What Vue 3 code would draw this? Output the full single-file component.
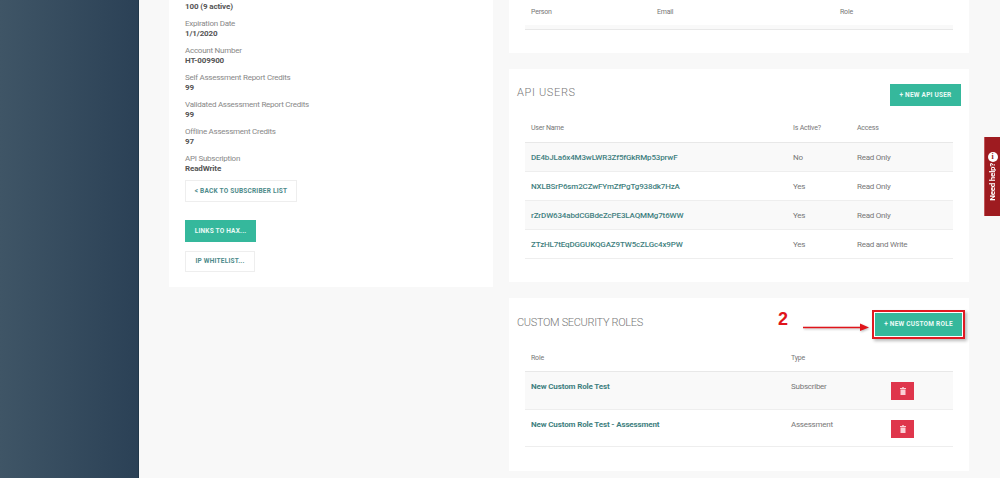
<script setup>
const fields = [
  ['Expiration Date', '1/1/2020'],
  ['Account Number', 'HT-009900'],
  ['Self Assessment Report Credits', '99'],
  ['Validated Assessment Report Credits', '99'],
  ['Offline Assessment Credits', '97'],
  ['API Subscription', 'ReadWrite'],
]
const apiUsers = [
  ['DE4bJLa6x4M3wLWR3Zf5fGkRMp53prwF', 'No', 'Read Only'],
  ['NXLBSrP6sm2CZwFYmZfPgTg938dk7HzA', 'Yes', 'Read Only'],
  ['rZrDW634abdCGBdeZcPE3LAQMMg7t6WW', 'Yes', 'Read Only'],
  ['ZTzHL7tEqDGGUKQGAZ9TW5cZLGc4x9PW', 'Yes', 'Read and Write'],
]
const roles = [
  ['New Custom Role Test', 'Subscriber'],
  ['New Custom Role Test - Assessment', 'Assessment'],
]
</script>

<template>
  <div class="page">
    <aside class="sidebar"></aside>
    <main class="main">
      <section class="card left">
        <div class="value first">100 (9 active)</div>
        <div v-for="f in fields" :key="f[0]" class="field">
          <div class="label">{{ f[0] }}</div>
          <div class="value">{{ f[1] }}</div>
        </div>
        <a class="btn outline back">&lt; Back to subscriber list</a>
        <a class="btn solid links">Links to HAX...</a>
        <a class="btn outline ip">IP Whitelist...</a>
      </section>
      <div class="right">
        <section class="card people">
          <div class="thead people-head">
            <span class="c-person">Person</span>
            <span class="c-email">Email</span>
            <span>Role</span>
          </div>
          <div class="empty-row"></div>
        </section>
        <section class="card api">
          <header class="card-head">
            <h2 class="api-title">API Users</h2>
            <a class="btn solid">+ New API User</a>
          </header>
          <div class="thead api-row api-thead">
            <span>User Name</span><span>Is Active?</span><span>Access</span>
          </div>
          <div v-for="u in apiUsers" :key="u[0]" class="api-row row">
            <a class="link">{{ u[0] }}</a><span>{{ u[1] }}</span><span>{{ u[2] }}</span>
          </div>
        </section>
        <section class="card rolescard">
          <header class="card-head role-head">
            <h2 class="role-title">Custom Security Roles</h2>
            <a class="btn solid marked">+ New Custom Role</a>
            <span class="note">2</span>
            <svg class="arrow" width="68" height="10" viewBox="0 0 68 10">
              <path d="M0 5.5H58" stroke="#e0141a" stroke-width="1.5" fill="none" />
              <path d="M57 1.5L66 5.5L57 9Z" fill="#e0141a" />
            </svg>
          </header>
          <div class="thead role-row role-thead">
            <span>Role</span><span>Type</span><span></span>
          </div>
          <div v-for="r in roles" :key="r[0]" class="role-row row">
            <a class="link strong">{{ r[0] }}</a>
            <span>{{ r[1] }}</span>
            <button class="del" type="button" aria-label="Delete">
              <svg width="6" height="8" viewBox="0 0 6 8">
                <path d="M0 1H2V0.2H4V1H6V2H0ZM0.5 2.5H5.5V8H0.5Z" fill="#fbd0d6" />
              </svg>
            </button>
          </div>
        </section>
      </div>
    </main>
    <aside class="help">
      <span class="help-i">i</span>
      <span class="help-text">Need help?</span>
    </aside>
  </div>
</template>

<style>
html, body { margin: 0; background: #f8f8f8; }
</style>

<style scoped>
.page {
  display: flex;
  width: 1000px;
  height: 478px;
  overflow: hidden;
  position: relative;
  font-family: Roboto, "Liberation Sans", sans-serif;
  font-size: 8px;
  letter-spacing: -0.25px;
  color: #777;
  background: #f8f8f8;
}
.sidebar {
  width: 138px;
  border-right: 1px solid #22384a;
  background: linear-gradient(90deg, #3f5566, #2b4156);
  flex: none;
}
.main {
  display: flex;
  align-items: flex-start;
  gap: 16px;
  margin-left: 30px;
}
.card { background: #fff; box-sizing: border-box; }
.left {
  width: 324px;
  height: 287px;
  padding: 1px 16px 0;
  display: flex;
  flex-direction: column;
  align-items: flex-start;
}
.field { margin-top: 5px; }
.label { line-height: 11px; height: 11px; color: #888; padding-top: 0.5px; box-sizing: border-box; }
.value { line-height: 11px; height: 11px; font-size: 8px; letter-spacing: -0.12px; font-weight: 700; color: #555; }
.btn {
  display: block;
  box-sizing: border-box;
  text-transform: uppercase;
  font-size: 6.5px;
  font-weight: 700;
  letter-spacing: 0.22px;
  white-space: nowrap;
  text-align: center;
}
.outline { border: 1px solid #eee; color: #4d8a8a; background: #fff; }
.solid { background: #35b89c; color: #eafaf6; }
.back { width: 112px; height: 22px; line-height: 20px; margin-top: 6px; }
.links { width: 71px; height: 22px; line-height: 22px; margin-top: 18px; }
.ip { width: 70px; height: 21px; line-height: 19px; margin-top: 9px; }

.right { width: 460px; display: flex; flex-direction: column; gap: 16px; }
.people { height: 53px; padding: 0 16px; }
.thead { color: #777; font-size: 7px; letter-spacing: -0.2px; }
.people-head { display: flex; height: 25px; line-height: 24px; padding-left: 6px; }
.c-person { width: 126px; }
.c-email { width: 183px; }
.empty-row { height: 4px; background: #f9f9f9; border-bottom: 1px solid #e8e8e8; }

.api { height: 213px; padding: 0 16px; }
.card-head {
  display: flex;
  align-items: flex-start;
  justify-content: space-between;
  margin: 0 -8px;
}
.api .card-head { padding-top: 15px; height: 37px; box-sizing: content-box; }
h2 {
  margin: 1px 0 0;
  font-size: 11px;
  font-weight: 300;
  line-height: 16px;
  color: #777;
  text-transform: uppercase;
}
.api-title { letter-spacing: 0.67px; }
.role-title { letter-spacing: -0.33px; }
.api .btn { width: 71px; height: 22px; line-height: 22px; }
.api-row {
  display: grid;
  grid-template-columns: 262px 64px 1fr;
  padding-left: 6px;
  align-items: center;
}
.api-thead {
  height: 22px;
  line-height: 15px;
  align-items: start;
  box-sizing: border-box;
  border-bottom: 1px solid #e8e8e8;
}
.row { border-bottom: 1px solid #eee; box-sizing: border-box; }
.api .row { height: 29px; }
.api .row:nth-of-type(even) { background: #f9f9f9; }
.link { color: #3f7f80; font-size: 8px; letter-spacing: -0.14px; font-weight: 500; }
.strong { font-weight: 700; }

.rolescard { height: 173px; padding: 0 16px; }
.role-head { position: relative; height: 49px; padding-top: 16px; box-sizing: border-box; }
.marked {
  width: 87px;
  height: 23px;
  line-height: 23px;
  margin: -1px -1px 0 0;
  box-shadow: 0 0 0 1px #fff, 0 0 0 3px #df1a22, 2px 2px 3px 3px #bbb;
}
.note {
  position: absolute;
  left: 261px;
  top: 11px;
  font: 700 18px/20px "Liberation Sans", sans-serif;
  letter-spacing: 0;
  color: #e0141a;
}
.arrow {
  position: absolute;
  left: 286px;
  top: 24px;
  filter: drop-shadow(1px 1px 1px #bbb);
}
.role-row {
  display: grid;
  grid-template-columns: 260px 100px 1fr;
  padding-left: 6px;
}
.role-thead { height: 25px; line-height: 22px; border-bottom: 1px solid #e8e8e8; box-sizing: border-box; }
.rolescard .row { height: 37.5px; padding-top: 9px; line-height: 11px; }
.rolescard .row:nth-of-type(even) { background: #f9f9f9; }
.del {
  width: 23px;
  height: 18px;
  padding: 0;
  border: 0;
  background: #df364c;
  display: flex;
  align-items: center;
  justify-content: center;
  margin-top: 1px;
}
.help {
  position: absolute;
  right: 0;
  top: 137px;
  width: 16px;
  height: 79px;
  box-sizing: border-box;
  background: #9e1b20;
  border-left: 1px solid #c2575a;
  color: #fff;
  display: flex;
  flex-direction: column;
  align-items: center;
  gap: 1px;
  padding-top: 15px;
}
.help-text {
  writing-mode: vertical-rl;
  transform: rotate(180deg);
  font-size: 8px;
  font-weight: 700;
  line-height: 10px;
  white-space: nowrap;
}
.help-i {
  width: 10px;
  height: 10px;
  border-radius: 50%;
  background: #fff;
  color: #9e1b20;
  font: 700 8px/10px "Liberation Serif", serif;
  letter-spacing: 0;
  text-align: center;
}
</style>
